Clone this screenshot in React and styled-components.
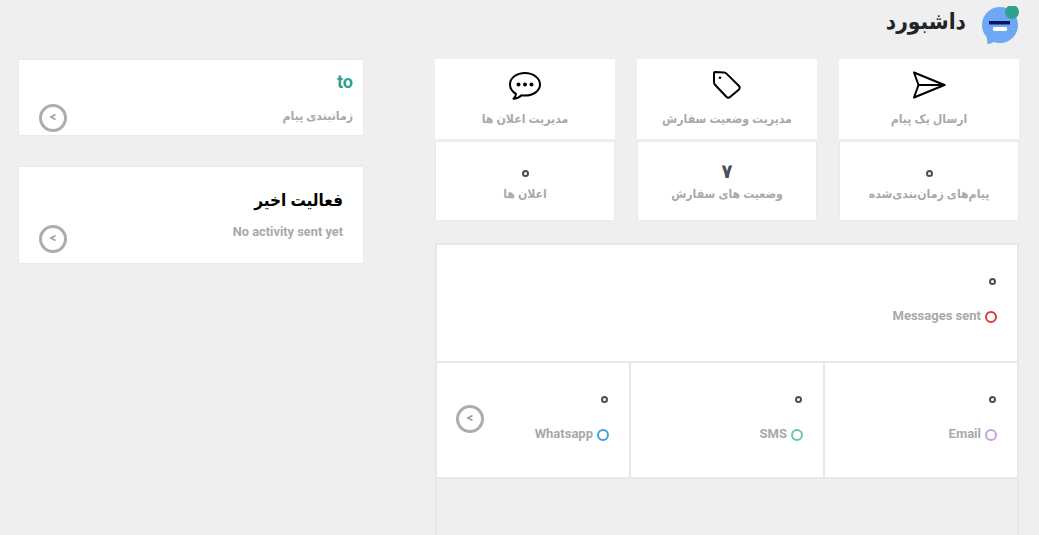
import React from 'react'
import styled, { createGlobalStyle } from 'styled-components'

const GlobalStyle = createGlobalStyle`
  html, body {
    margin: 0;
    height: 535px;
    overflow: hidden;
    background: #efefef;
    font-family: Roboto, "DejaVu Sans Condensed", "DejaVu Sans", sans-serif;
  }
`

const Page = styled.div`
  direction: rtl;
  height: 535px;
  overflow: hidden;
  padding: 0 20px 0 18px;
`

const Header = styled.header`
  display: flex;
  align-items: flex-start;
  gap: 15px;
  height: 59px;
`

const Title = styled.h1`
  margin: 1px 0 0;
  font-size: 22.5px;
  font-weight: 700;
  line-height: 40px;
  color: #222426;
`

const Columns = styled.div`
  display: flex;
  justify-content: space-between;
  align-items: flex-start;
`

const MainColumn = styled.main`
  width: 584px;
  display: flex;
  flex-direction: column;
`

const SideColumn = styled.aside`
  width: 346px;
  display: flex;
  flex-direction: column;
  gap: 30px;
`

const CardGrid = styled.div`
  display: grid;
  grid-template-columns: repeat(3, 180px);
  justify-content: space-between;
  grid-auto-rows: 80px;
  row-gap: 2px;
`

const Tile = styled.div`
  background: #fff;
  border: 1px solid #ebebe6;
  box-sizing: border-box;
  display: flex;
  flex-direction: column;
  align-items: center;
  text-align: center;
`

const ActionTile = styled(Tile)`
  border-color: #fff;
  padding-top: 7px;
  svg { height: 36px; display: block; }
`

const StatTile = styled(Tile)`
  padding-top: 20px;
`

const TileLabel = styled.div`
  font-size: 12.2px;
  font-weight: 700;
  color: #a9a9a9;
  line-height: 18px;
  margin-top: ${p => p.$gap || 0}px;
`

const DigitBox = styled.div`
  height: 22px;
  box-sizing: border-box;
  padding-bottom: ${p => (p.$raised ? 4 : 0)}px;
  display: flex;
  align-items: center;
  justify-content: center;
  font-size: 20px;
  font-weight: 700;
  color: #4b4f56;
  line-height: 18px;
`

// the font's zero glyph is a plain dot, the reference shows a small ring
const Zero = styled.span`
  display: block;
  width: 7px;
  height: 7px;
  border: 2px solid #4b4f56;
  border-radius: 50%;
  box-sizing: border-box;
  font-size: 6px;
  line-height: 3px;
  color: transparent;
  overflow: hidden;
`

const Panel = styled.section`
  margin-top: 22px;
  height: 292px;
  border: 2px solid #e9e9e4;
  border-bottom: 0;
  box-sizing: border-box;
  display: flex;
  flex-direction: column;
`

const WideStat = styled.div`
  background: #fff;
  height: 118px;
  border-bottom: 2px solid #e9e9e4;
  padding: 26px 20px 0;
  box-sizing: border-box;
  flex: none;
`

const StatRow = styled.div`
  display: grid;
  grid-template-columns: repeat(3, 1fr);
  gap: 2px;
  height: 116px;
  flex: none;
  background: #e9e9e4;
  border-bottom: 2px solid #e9e9e4;
  box-sizing: border-box;
`

const StatCell = styled.div`
  background: #fff;
  padding: 26px 20px 0 19px;
  display: flex;
  justify-content: space-between;
  align-items: flex-start;
`

const StatValue = styled.div`
  height: 20px;
  display: flex;
  align-items: center;
  padding-right: 1px;
`

const StatLabel = styled.div`
  display: flex;
  align-items: center;
  gap: 4px;
  margin-top: 15px;
  font-size: 13px;
  font-weight: 700;
  color: #a9a9a9;
  line-height: 20px;
`

const Dot = styled.span`
  width: 12px;
  height: 12px;
  border: 2px solid ${p => p.$color};
  border-radius: 50%;
  box-sizing: border-box;
  flex: none;
  margin-top: 2px;
`

const SideCard = styled.div`
  background: #fff;
  border: 1px solid #ebebe6;
  box-sizing: border-box;
  height: ${p => p.$height}px;
  padding: ${p => p.$padding};
  display: flex;
  justify-content: space-between;
`

const Accent = styled.div`
  font-size: 18px;
  font-weight: 700;
  color: #2fa08e;
  line-height: 22px;
`

const SideLabel = styled.div`
  font-size: ${p => p.$size || 12.2}px;
  font-weight: 700;
  color: #a9a9a9;
  line-height: 20px;
  margin-top: ${p => p.$gap}px;
`

const SideTitle = styled.h2`
  margin: 0;
  font-size: 17px;
  font-weight: 700;
  color: #000;
  line-height: 26px;
`

const ArrowRing = styled.span`
  width: 28px;
  height: 28px;
  border: 3px solid #aeacac;
  border-radius: 50%;
  box-sizing: border-box;
  flex: none;
  align-self: ${p => p.$align || 'flex-end'};
  margin-top: ${p => p.$top || 0}px;
  display: flex;
  align-items: center;
  justify-content: center;
  svg { display: block; margin-top: -3px; }
`

const Arrow = ({ align, top }) => (
  <ArrowRing $align={align} $top={top}>
    <svg width="8" height="8" viewBox="0 0 8 8" fill="none" stroke="#a3a1a1" strokeWidth="1.8">
      <path d="M6.5 1.5 2 4l4.5 2.5" />
    </svg>
  </ArrowRing>
)

const BubbleLogo = styled(({ className }) => (
  <svg className={className} width="38" height="40" viewBox="0 0 38 40">
    <circle cx="19" cy="19" r="18" fill="#6ea8f5" />
    <path d="M5.500 29 6.500 38c3-.2 6-1.500 8.500-3.500Z" fill="#6ea8f5" />
    <rect x="8" y="15" width="21" height="3.500" fill="#0a1464" />
    <rect x="12" y="21" width="14" height="4" rx="1.500" fill="#fff" />
    <circle cx="31" cy="6" r="7" fill="#2fa08e" />
  </svg>
))`
  display: block;
  flex: none;
  margin-top: 6px;
`

const SendIcon = () => (
  <svg viewBox="0 0 36 36" width="36" height="36" fill="none" stroke="#000" strokeWidth="2" strokeLinejoin="round" strokeLinecap="round">
    <path d="M3 5.500 33.500 18 3 30.500 7.500 18Z" />
    <path d="M7.500 18h26" />
  </svg>
)

const TagIcon = () => (
  <svg viewBox="0 0 36 36" width="36" height="36" fill="none" stroke="#000" strokeWidth="2" strokeLinejoin="round">
    <path d="M6 5 15 5.500Q16.500 5.600 17.500 6.600L30 19a2.400 2.400 0 0 1 0 3.400L21 30a2.400 2.400 0 0 1-3.400 0L6.200 18Q5 16.800 5 15L5 6Q5 5 6 5Z" />
    <circle cx="11" cy="10.700" r="1.300" fill="#000" stroke="none" />
  </svg>
)

const ChatIcon = () => (
  <svg viewBox="0 0 36 36" width="36" height="36" fill="none" stroke="#000" strokeWidth="2" strokeLinejoin="round">
    <path d="M18 6C9.500 6 3 11 3 17.500c0 4 2.500 7.300 6 9.300-.3 2-1.300 4-2.500 5 3 0 6-1.500 8-3.500 1 .2 2.300.3 3.500.3 8.500 0 15-5 15-11.100S26.500 6 18 6Z" />
    <circle cx="11.500" cy="17.500" r="2" fill="#000" stroke="none" />
    <circle cx="18" cy="17.500" r="2" fill="#000" stroke="none" />
    <circle cx="24.500" cy="17.500" r="2" fill="#000" stroke="none" />
  </svg>
)

const channels = [
  { label: 'Email', color: '#c9a0e0' },
  { label: 'SMS', color: '#63c7b2' },
  { label: 'Whatsapp', color: '#3f9fe0' },
]

export default function App() {
  return (
    <Page>
      <GlobalStyle />
      <Header>
        <BubbleLogo />
        <Title>داشبورد</Title>
      </Header>
      <Columns>
        <MainColumn>
          <CardGrid>
            <ActionTile><SendIcon /><TileLabel $gap={7}>ارسال یک پیام</TileLabel></ActionTile>
            <ActionTile><TagIcon /><TileLabel $gap={7}>مدیریت وضعیت سفارش</TileLabel></ActionTile>
            <ActionTile><ChatIcon /><TileLabel $gap={7}>مدیریت اعلان ها</TileLabel></ActionTile>
            <StatTile><DigitBox><Zero>۰</Zero></DigitBox><TileLabel $gap={1}>پیام‌های زمان‌بندی‌شده</TileLabel></StatTile>
            <StatTile><DigitBox $raised>۷</DigitBox><TileLabel $gap={1}>وضعیت های سفارش</TileLabel></StatTile>
            <StatTile><DigitBox><Zero>۰</Zero></DigitBox><TileLabel $gap={1}>اعلان ها</TileLabel></StatTile>
          </CardGrid>
          <Panel>
            <WideStat>
              <StatValue><Zero>۰</Zero></StatValue>
              <StatLabel><Dot $color="#d93a3a" />Messages sent</StatLabel>
            </WideStat>
            <StatRow>
              {channels.map((c, i) => (
                <StatCell key={c.label}>
                  <div>
                    <StatValue><Zero>۰</Zero></StatValue>
                    <StatLabel><Dot $color={c.color} />{c.label}</StatLabel>
                  </div>
                  {i === 2 && <Arrow align="flex-start" top={16} />}
                </StatCell>
              ))}
            </StatRow>
          </Panel>
        </MainColumn>
        <SideColumn>
          <SideCard $height={77} $padding="11px 10px 3px 20px">
            <div>
              <Accent>to</Accent>
              <SideLabel $gap={13}>زمانبندی پیام</SideLabel>
            </div>
            <Arrow />
          </SideCard>
          <SideCard $height={98} $padding="20px 20px 10px 20px">
            <div>
              <SideTitle>فعالیت اخیر</SideTitle>
              <SideLabel $gap={9} $size={12.8} dir="ltr">No activity sent yet</SideLabel>
            </div>
            <Arrow />
          </SideCard>
        </SideColumn>
      </Columns>
    </Page>
  )
}
